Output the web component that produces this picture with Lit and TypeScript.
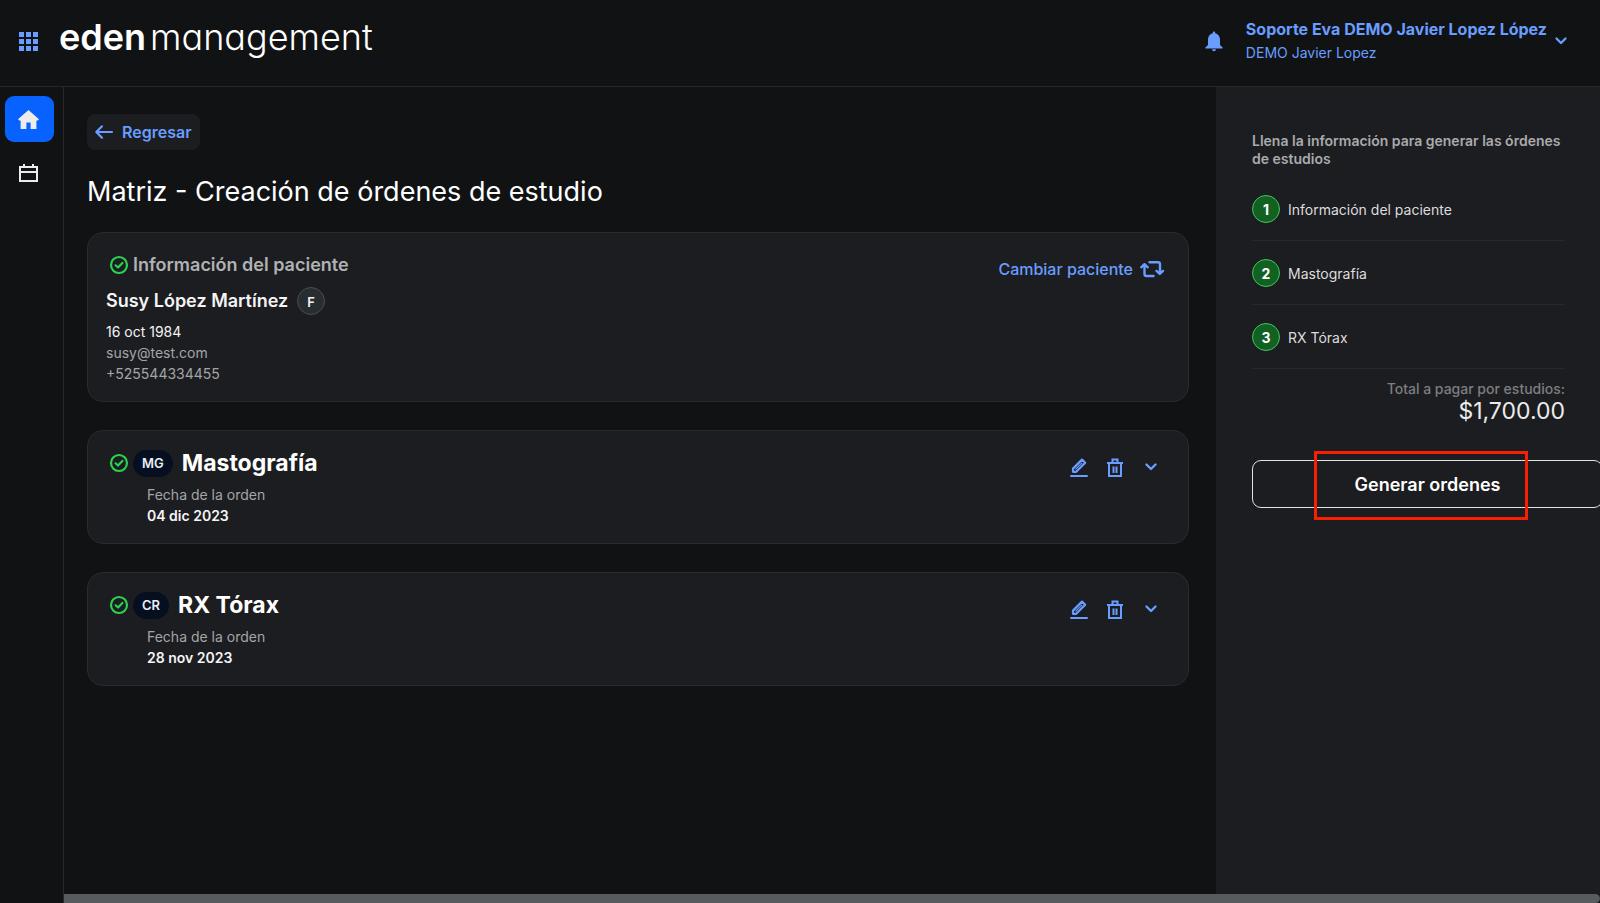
import { LitElement, html, css, svg } from "lit";
import { customElement, state } from "lit/decorators.js";

interface Study {
  code: string;
  name: string;
  date: string;
}

const icon = (size: string, box: string, body: unknown) =>
  html`<svg class="icon ${size}" viewBox=${box} aria-hidden="true">${body}</svg>`;

const dots = svg`${[0, 7, 14].flatMap((y) =>
  [0, 7, 14].map((x) => svg`<rect x=${x} y=${y} width="5" height="5" fill="currentColor" />`)
)}`;

const bell = svg`<path fill="currentColor" d="M9 0.5C8.3 0.5 7.8 1 7.8 1.7v.6C4.9 3 3 5.4 3 8.4V14L.4 16.4V17.4H17.6V16.4L15 14V8.4C15 5.4 13.1 3 10.2 2.3V1.7C10.2 1 9.700.5 9 .5ZM7 18.300a2 1.900 0 0 0 4 0Z" />`;

const house = svg`<path fill="currentColor" d="M10.500 0 0 9.300 1.200 10.400H2.600V19H8.400V12.500H12.600V19H18.400V10.400H19.800L21 9.300Z" />`;

const calendar = svg`<path fill="none" stroke="currentColor" stroke-width="2" d="M1 3H18V17H1ZM1 8H18M5 0V3M14 0V3" />`;

const arrow = svg`<path fill="none" stroke="currentColor" stroke-width="2.200" stroke-linecap="round" stroke-linejoin="round" d="M17 7H1.500M7 1.300 1.300 7 7 12.700" />`;

const check = svg`<circle cx="9" cy="9" r="8" fill="none" stroke="currentColor" stroke-width="2.200" /><path fill="none" stroke="currentColor" stroke-width="2.200" stroke-linecap="round" stroke-linejoin="round" d="M5.600 9.300 8 11.500 12.400 6.900" />`;

const swap = svg`<path fill="none" stroke="currentColor" stroke-width="2.400" stroke-linecap="round" stroke-linejoin="round" d="M1.200 6.300 4.500 3.200 7.800 6.300M4.500 3.800V13Q4.500 15 6.500 15H13.500M9.500 1.200H18Q20 1.200 20 3.200V12.600M16.500 9.900 19.800 13 23 9.900" />`;

const pencil = svg`<path fill="none" stroke="currentColor" stroke-width="2.200" stroke-linejoin="round" d="M3 13.800V10.600L12 1.600 15.200 4.800 6.200 13.800Z" /><path stroke="currentColor" stroke-width="1.200" d="M5.500 11.300 12 4.800" /><path stroke="currentColor" stroke-width="2" stroke-linecap="round" d="M1 18H17" />`;

const trash = svg`<path fill="none" stroke="currentColor" stroke-width="2" d="M0 5H16M2 5V18H14V5M5.500 5V1.500H10.500V5M6.500 8.500V15M9.500 8.500V15" />`;

const chevron = svg`<path fill="none" stroke="currentColor" stroke-width="2.400" stroke-linecap="round" stroke-linejoin="round" d="M1.500 1.500 6 6 10.500 1.500" />`;

@customElement("app-root")
export class AppRoot extends LitElement {
  @state() private studies: Study[] = [
    { code: "MG", name: "Mastografía", date: "04 dic 2023" },
    { code: "CR", name: "RX Tórax", date: "28 nov 2023" },
  ];

  static styles = css`
    :host {
      display: flex;
      flex-direction: column;
      min-height: 100vh;
      overflow: hidden;
      background: #111214;
      color: #f4f4f5;
      font: 14px/21px Inter, "Liberation Sans", sans-serif;
    }
    * { box-sizing: border-box; }
    h1, h2, p, ol { margin: 0; padding: 0; }
    a { color: inherit; text-decoration: none; }
    button {
      display: flex;
      align-items: center;
      justify-content: center;
      border: 0;
      padding: 0;
      background: none;
      color: #699dff;
      font: inherit;
      cursor: pointer;
    }
    .icon { display: block; flex: none; overflow: visible; }
    .i-dots { width: 19px; height: 19px; }
    .i-bell { width: 18px; height: 20px; }
    .i-house { width: 21px; height: 19px; }
    .i-cal { width: 19px; height: 18px; }
    .i-arrow { width: 18px; height: 14px; }
    .i-check { width: 18px; height: 18px; color: #2bd14f; }
    .i-swap { width: 24px; height: 16px; }
    .i-pencil { width: 18px; height: 19px; }
    .i-trash { width: 16px; height: 19px; }
    .i-chevron { width: 12px; height: 8px; }

    .header {
      display: flex;
      align-items: center;
      padding: 15px 33px 19px 19px;
      border-bottom: 1px solid #27282b;
    }
    .brand {
      display: flex;
      gap: 4px;
      margin-left: 21px;
      padding-bottom: 8px;
      font-size: 36px;
      line-height: 44px;
      font-feature-settings: "cv11", "ss03";
      color: #fff;
    }
    .brand-name { font-weight: 600; }
    .brand-product { font-weight: 300; }
    .bell { margin-left: auto; }
    .account { gap: 8px; margin-left: 23px; text-align: left; }
    .account-names { display: grid; line-height: 24px; }
    .account-name { font-size: 16px; font-weight: 700; }

    .body { display: flex; flex: 1; }
    .rail {
      display: flex;
      flex-direction: column;
      gap: 22px;
      width: 64px;
      padding: 9px 9px 0 5px;
      border-right: 1px solid #27282b;
      flex: none;
    }
    .rail-link {
      display: grid;
      place-items: center;
      padding-right: 2px;
      color: #ececec;
    }
    .rail-link.active { height: 46px; border-radius: 9px; background: #0762ff; }
    .stage { display: flex; flex-direction: column; flex: 1; min-width: 0; }
    .columns { display: flex; flex: 1; }
    .scrollbar { height: 9px; border-radius: 0 5px 5px 0; background: #575b5e; }

    .main {
      display: flex;
      flex-direction: column;
      align-items: stretch;
      flex: 1;
      min-width: 0;
      padding: 27px 27px 27px 23px;
    }
    .back {
      align-self: flex-start;
      gap: 9px;
      height: 36px;
      padding: 0 8px;
      border-radius: 8px;
      background: #1c1d20;
      font-size: 16px;
      font-weight: 600;
    }
    .title {
      margin: 24px 0 22px;
      font-size: 27px;
      line-height: 36px;
      font-weight: 400;
      color: #fff;
    }
    .cards { display: grid; gap: 28px; }
    .card {
      display: flex;
      justify-content: space-between;
      align-items: flex-start;
      padding: 18px 24px 17px 18px;
      border: 1px solid #292b2f;
      border-radius: 16px;
      background: #1c1d20;
    }
    .card-head { display: flex; align-items: center; gap: 5px; padding-left: 4px; }
    .card-label { font-size: 18px; line-height: 28px; font-weight: 600; color: #b1b2b4; }
    .person { display: flex; align-items: center; gap: 9px; margin: 8px 0 6px; font-size: 18px; line-height: 28px; font-weight: 600; }
    .sex {
      display: grid;
      place-items: center;
      width: 28px;
      height: 28px;
      border: 1px solid #4a4d50;
      border-radius: 50%;
      background: #282d31;
      font-size: 13px;
    }
    .muted { color: #a4a5a8; }
    .change { gap: 7px; margin-top: 6px; height: 24px; font-size: 16px; font-weight: 500; }
    .pill {
      padding: 3px 9px;
      border-radius: 14px;
      background: #060f20;
      font-size: 13px;
      font-weight: 600;
      color: #e8eefb;
    }
    .study-name { margin-left: 4px; font-size: 23px; line-height: 28px; font-weight: 700; color: #fff; }
    .study-info { padding: 7px 0 0 41px; }
    .strong { font-weight: 600; }
    .actions { display: flex; align-items: center; gap: 18px; margin: 6px 4px 0 0; }
    .action { min-width: 18px; height: 24px; }

    .panel {
      display: flex;
      flex-direction: column;
      width: 384px;
      flex: none;
      padding: 45px 35px 0 36px;
      background: #1c1d20;
    }
    .hint { line-height: 18px; font-weight: 600; color: #a9aaac; margin-bottom: 9px; }
    .steps { list-style: none; }
    .step {
      display: flex;
      align-items: center;
      gap: 8px;
      padding: 18px 0 17px;
      border-bottom: 1px solid #28292c;
      color: #dcdcdd;
    }
    .number {
      display: grid;
      place-items: center;
      width: 28px;
      height: 28px;
      border: 1px solid #3fc55e;
      border-radius: 50%;
      background: #136023;
      color: #fff;
      font-weight: 700;
    }
    .total { display: grid; justify-items: end; padding-top: 9px; }
    .total-label { font-weight: 500; color: #7d7e81; }
    .amount { font-size: 23px; line-height: 24px; color: #ececed; }
    .submit { position: relative; display: flex; margin: 37px -38px 0 0; }
    .generate {
      flex: 1;
      height: 48px;
      border: 1px solid #dfe2e6;
      border-radius: 9px;
      font-size: 18px;
      font-weight: 600;
      color: #fff;
    }
    .highlight {
      position: absolute;
      inset: -9px 75px -12px 62px;
      border: 3px solid #f81f05;
      pointer-events: none;
    }
  `;

  private renderStudy(study: Study) {
    return html`
      <section class="card">
        <div>
          <div class="card-head">
            ${icon("i-check", "0 0 18 18", check)}
            <span class="pill">${study.code}</span>
            <h2 class="study-name">${study.name}</h2>
          </div>
          <div class="study-info">
            <p class="muted">Fecha de la orden</p>
            <p class="strong">${study.date}</p>
          </div>
        </div>
        <div class="actions">
          <button class="action" aria-label="Editar">${icon("i-pencil", "0 0 18 19", pencil)}</button>
          <button class="action" aria-label="Eliminar">${icon("i-trash", "0 0 16 19", trash)}</button>
          <button class="action" aria-label="Ver detalle">${icon("i-chevron", "0 0 12 8", chevron)}</button>
        </div>
      </section>
    `;
  }

  render() {
    const steps = ["Información del paciente", ...this.studies.map((s) => s.name)];
    return html`
      <header class="header">
        <button aria-label="Aplicaciones">${icon("i-dots", "0 0 19 19", dots)}</button>
        <a class="brand" href="#"><span class="brand-name">eden</span><span class="brand-product">management</span></a>
        <button class="bell" aria-label="Notificaciones">${icon("i-bell", "0 0 18 20", bell)}</button>
        <button class="account">
          <span class="account-names">
            <span class="account-name">Soporte Eva DEMO Javier Lopez López</span>
            <span>DEMO Javier Lopez</span>
          </span>
          ${icon("i-chevron", "0 0 12 8", chevron)}
        </button>
      </header>
      <div class="body">
        <nav class="rail">
          <a class="rail-link active" href="#" aria-label="Inicio">${icon("i-house", "0 0 21 19", house)}</a>
          <a class="rail-link" href="#" aria-label="Agenda">${icon("i-cal", "0 0 19 18", calendar)}</a>
        </nav>
        <div class="stage">
          <div class="columns">
            <main class="main">
              <button class="back">${icon("i-arrow", "0 0 18 14", arrow)}Regresar</button>
              <h1 class="title">Matriz - Creación de órdenes de estudio</h1>
              <div class="cards">
                <section class="card">
                  <div>
                    <div class="card-head">
                      ${icon("i-check", "0 0 18 18", check)}
                      <h2 class="card-label">Información del paciente</h2>
                    </div>
                    <div class="person">Susy López Martínez<span class="sex">F</span></div>
                    <p>16 oct 1984</p>
                    <p class="muted">susy@test.com</p>
                    <p class="muted">+525544334455</p>
                  </div>
                  <button class="change">Cambiar paciente ${icon("i-swap", "0 0 24 16", swap)}</button>
                </section>
                ${this.studies.map((s) => this.renderStudy(s))}
              </div>
            </main>
            <aside class="panel">
              <p class="hint">Llena la información para generar las órdenes de estudios</p>
              <ol class="steps">
                ${steps.map((label, i) => html`<li class="step"><span class="number">${i + 1}</span>${label}</li>`)}
              </ol>
              <div class="total">
                <span class="total-label">Total a pagar por estudios:</span>
                <span class="amount">$1,700.00</span>
              </div>
              <div class="submit">
                <button class="generate">Generar ordenes</button>
                <div class="highlight"></div>
              </div>
            </aside>
          </div>
          <div class="scrollbar"></div>
        </div>
      </div>
    `;
  }
}
